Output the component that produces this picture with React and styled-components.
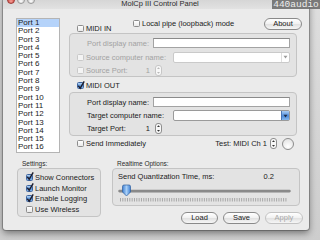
import React from "react";
import styled, { createGlobalStyle } from "styled-components";

const GlobalStyle = createGlobalStyle`
  html, body { margin: 0; padding: 0; }
  body {
    width: 320px;
    height: 240px;
    overflow: hidden;
    background: #d7d7d7;
    font-family: "Liberation Sans", Arial, sans-serif;
    font-size: 7.5px;
    color: #1b1b1b;
  }
  * { box-sizing: border-box; }
`;

const Desktop = styled.div`
  position: relative;
  width: 320px;
  height: 240px;
  overflow: hidden;
  background: linear-gradient(#dedede, #cdcdcd);
`;

const Watermark = styled.div`
  position: absolute;
  top: 0;
  right: 0;
  width: 48px;
  height: 9px;
  background: rgba(105, 105, 105, 0.85);
  color: #ededed;
  font-family: "Liberation Mono", monospace;
  font-size: 9.5px;
  line-height: 9px;
  text-align: center;
`;

const Window = styled.div`
  margin: -5px 0 0 3px;
  width: 306px;
  height: 235px;
  background: #ebebeb;
  border-radius: 0 0 3px 3px;
  box-shadow: 0 0 0 1px rgba(0, 0, 0, 0.22), 0 3px 7px rgba(0, 0, 0, 0.45);
  display: flex;
  flex-direction: column;
`;

const TitleBar = styled.div`
  flex: none;
  height: 14px;
  display: grid;
  grid-template-columns: 1fr auto 1fr;
  align-items: start;
  padding: 1px 0 0 4px;
  background: linear-gradient(#cfcfcf, #e2e2e2);
`;

const Lights = styled.div`
  display: flex;
  gap: 2px;
`;

const Light = styled.span`
  width: 8px;
  height: 8px;
  border-radius: 50%;
  border: 1px solid ${(p) => (p.$red ? "#9c3a36" : "#9a9a9a")};
  background: ${(p) =>
    p.$red
      ? "radial-gradient(circle at 50% 70%, #f5a39b, #d0453d 70%)"
      : "radial-gradient(circle at 50% 70%, #ffffff, #c9c9c9 70%)"};
`;

const Title = styled.div`
  margin-top: 3px;
  padding-left: 4px;
  font-size: 7.5px;
  line-height: 9px;
  color: #2a2a2a;
  white-space: nowrap;
`;

const Content = styled.div`
  flex: 1;
  display: flex;
  flex-direction: column;
  padding: 8px 0 0 13px;
`;

const TopGrid = styled.div`
  display: grid;
  grid-template-columns: 44px 232px;
  column-gap: 9px;
  align-items: start;
`;

const PortList = styled.ul`
  margin: 1px 0 0;
  padding: 0;
  list-style: none;
  height: 135px;
  background: #ffffff;
  border: 1px solid #b4b4b4;
`;

const PortItem = styled.li`
  height: 8.31px;
  line-height: 8.31px;
  padding-left: 1px;
  font-size: 8px;
  white-space: nowrap;
  background: ${(p) => (p.$selected ? "#b5d3fa" : "transparent")};
`;

const RightPanel = styled.div`
  display: flex;
  flex-direction: column;
`;

const HeaderRow = styled.div`
  display: flex;
  align-items: flex-start;
  height: 16px;
  padding-left: 8px;
`;

const CheckLabel = styled.label`
  display: inline-flex;
  align-items: center;
  gap: 2px;
  height: 9px;
  margin-top: ${(p) => p.$top || 0}px;
  width: ${(p) => (p.$width ? `${p.$width}px` : "auto")};
  flex: ${(p) => (p.$grow ? 1 : "none")};
  white-space: nowrap;
  color: ${(p) => (p.$disabled ? "#a2a2a2" : "#1b1b1b")};
`;

const Box = styled.span`
  flex: none;
  width: 7px;
  height: 7px;
  border-radius: 1.5px;
  border: 1px solid ${(p) => (p.$disabled ? "#c9c9c9" : p.$checked ? "#3d64a0" : "#8c8c8c")};
  background: ${(p) =>
    p.$checked
      ? "linear-gradient(#b6d6f6, #5d97dd 55%, #7fb2ea)"
      : p.$disabled
      ? "#f4f4f4"
      : "linear-gradient(#ffffff, #e9e9e9)"};
  display: flex;
  align-items: center;
  justify-content: center;
  overflow: visible;
`;

const Checkbox = ({ checked, disabled }) => (
  <Box $checked={checked} $disabled={disabled}>
    {checked && (
      <svg width="8" height="8" viewBox="0 0 8 8" style={{ overflow: "visible" }}>
        <path d="M1.3 3.8 L3.2 6.2 L7.2 -0.6" fill="none" stroke="#1c1c2c" strokeWidth="1.4" />
      </svg>
    )}
  </Box>
);

const PillButton = styled.button`
  flex: none;
  width: ${(p) => p.$width || 37}px;
  height: 12px;
  margin: ${(p) => p.$margin || "0"};
  padding: 0;
  border-radius: 6px;
  border: 1px solid ${(p) => (p.disabled ? "#c3c3c3" : "#8a8a8a")};
  background: linear-gradient(#ffffff, #f2f2f2 45%, #e2e2e2 55%, #f6f6f6);
  font-family: "Liberation Sans", Arial, sans-serif;
  font-size: 7.5px;
  line-height: 10px;
  color: ${(p) => (p.disabled ? "#a9a9a9" : "#1b1b1b")};
`;

const GroupBox = styled.div`
  width: 228px;
  height: ${(p) => p.$height}px;
  border: 1px solid #c4c4c4;
  border-radius: 4px;
  background: #e3e3e3;
  padding: 4px 6px 0 7px;
  display: flex;
  flex-direction: column;
`;

const FormRow = styled.div`
  display: flex;
  align-items: center;
  height: ${(p) => p.$height || 10}px;
  margin-top: ${(p) => p.$top || 0}px;
`;

const FieldLabel = styled.span`
  flex: none;
  width: ${(p) => p.$width || 76}px;
  padding-left: 10px;
  white-space: nowrap;
  color: ${(p) => (p.$disabled ? "#a2a2a2" : "#1b1b1b")};
`;

const TextField = styled.div`
  flex: 1;
  height: 10px;
  background: #ffffff;
  border: 1px solid #a3a3a3;
  border-top-color: #8a8a8a;
`;

const Combo = styled.div`
  margin-left: auto;
  width: 117px;
  height: 11px;
  display: flex;
  justify-content: flex-end;
  background: #ffffff;
  border: 1px solid ${(p) => (p.$disabled ? "#cacaca" : "#9a9a9a")};
  border-radius: 2px;
`;

const ComboArrow = styled.span`
  width: 8px;
  height: 100%;
  display: flex;
  align-items: center;
  justify-content: center;
  border-left: 1px solid ${(p) => (p.$active ? "#4a76b5" : "#dedede")};
  background: ${(p) => (p.$active ? "linear-gradient(#a9cdf5, #4e8bda 55%, #86b8ee)" : "transparent")};
`;

const ValueCell = styled.span`
  flex: none;
  width: 73px;
  display: flex;
  align-items: center;
  justify-content: space-between;
  padding-left: ${(p) => (p.$flush ? 0 : 10)}px;
  color: ${(p) => (p.$disabled ? "#a2a2a2" : "#1b1b1b")};
`;

const StepperWrap = styled.span`
  flex: none;
  display: flex;
  margin-left: ${(p) => p.$left || 5}px;
`;

const Stepper = ({ disabled, left }) => (
  <StepperWrap $left={left}>
    <svg width="7" height="11" viewBox="0 0 7 11">
      <rect x="0.5" y="0.5" width="6" height="10" rx="2.5" fill="#f7f7f7" stroke={disabled ? "#c6c6c6" : "#8e8e8e"} />
      <path d="M2 4 L3.5 2.3 L5 4 Z" fill={disabled ? "#b8b8b8" : "#333"} />
      <path d="M2 7 L3.5 8.7 L5 7 Z" fill={disabled ? "#b8b8b8" : "#333"} />
    </svg>
  </StepperWrap>
);

const ArrowDown = ({ color }) => (
  <svg width="5" height="4" viewBox="0 0 5 4">
    <path d="M0.5 0.8 L4.5 0.8 L2.5 3.4 Z" fill={color} />
  </svg>
);

const CheckRow = styled.div`
  display: flex;
  align-items: flex-start;
  height: ${(p) => p.$height}px;
  padding-left: 8px;
`;

const ActionRow = styled.div`
  display: flex;
  align-items: center;
  height: 13px;
  margin-top: 1px;
  padding: 0 7px 0 8px;
`;

const TestGroup = styled.div`
  margin-left: auto;
  display: flex;
  align-items: center;
`;

const RoundButton = styled.span`
  width: 12px;
  height: 12px;
  margin-left: 5px;
  border-radius: 50%;
  border: 1px solid #8c8c8c;
  background: radial-gradient(circle at 50% 75%, #ffffff, #e6e6e6 75%);
`;

const BottomGrid = styled.div`
  display: grid;
  grid-template-columns: 85px 189px;
  column-gap: 11px;
  margin-top: 6px;
`;

const Column = styled.div`
  display: flex;
  flex-direction: column;
`;

const SectionLabel = styled.div`
  height: 9px;
  line-height: 9px;
  padding-left: ${(p) => p.$pad}px;
  font-size: 6.5px;
  color: #2a2a2a;
`;

const SettingsBox = styled.div`
  margin-left: 1px;
  width: 84px;
  height: 49px;
  border: 1px solid #c4c4c4;
  border-radius: 4px;
  background: #e3e3e3;
  padding: 3px 0 0 8px;
  display: flex;
  flex-direction: column;
`;

const SettingItem = styled.div`
  height: 10.7px;
  display: flex;
  align-items: center;
`;

const RealtimeBox = styled.div`
  width: 188px;
  height: 38px;
  border: 1px solid #c4c4c4;
  border-radius: 4px;
  background: #e3e3e3;
  padding: 4px 0 0 5px;
  display: flex;
  flex-direction: column;
`;

const QuantRow = styled.div`
  height: 8px;
  line-height: 8px;
  display: flex;
  justify-content: space-between;
  padding-right: 25px;
`;

const SliderWrap = styled.div`
  margin-top: 2px;
  height: 20px;
  display: flex;
`;

const ButtonRow = styled.div`
  display: flex;
  justify-content: flex-end;
  gap: 5px;
  margin: 6px -2px 0 0;
`;

const Slider = () => {
  const ticks = [];
  for (let i = 0; i < 72; i++) {
    const x = 2.5 + i * 2.33;
    ticks.push(<line key={i} x1={x} y1="15" x2={x} y2="18.5" stroke="#8d8d8d" strokeWidth="0.7" />);
  }
  return (
    <svg width="174" height="20" viewBox="0 0 174 20">
      <rect x="0.5" y="7" width="172" height="2.2" rx="1.1" fill="#8f8f8f" stroke="#6f6f6f" strokeWidth="0.4" />
      {ticks}
      <defs>
        <linearGradient id="knob" x1="0" y1="0" x2="1" y2="0">
          <stop offset="0" stopColor="#3f7fd2" />
          <stop offset="0.5" stopColor="#a9d0f7" />
          <stop offset="1" stopColor="#3f7fd2" />
        </linearGradient>
      </defs>
      <path d="M4.5 3.5 Q4.5 2 6 2 L11 2 Q12.5 2 12.5 3.5 L12.5 9 L8.5 13 L4.5 9 Z" fill="url(#knob)" stroke="#2e5f9e" strokeWidth="0.7" />
    </svg>
  );
};

const ports = Array.from({ length: 16 }, (_, i) => `Port ${i + 1}`);

export default function App() {
  return (
    <>
      <GlobalStyle />
      <Desktop>
        <Window>
          <TitleBar>
            <Lights>
              <Light $red />
              <Light />
              <Light />
            </Lights>
            <Title>MolCp III Control Panel</Title>
            <span />
          </TitleBar>
          <Content>
            <TopGrid>
              <PortList>
                {ports.map((p, i) => (
                  <PortItem key={p} $selected={i === 0}>
                    {p}
                  </PortItem>
                ))}
              </PortList>
              <RightPanel>
                <HeaderRow>
                  <CheckLabel $top={7} $width={56}>
                    <Checkbox />
                    MIDI IN
                  </CheckLabel>
                  <CheckLabel $top={2} $grow>
                    <Checkbox />
                    Local pipe (loopback) mode
                  </CheckLabel>
                  <PillButton $width={38} $margin="1px -1px 0 0">
                    About
                  </PillButton>
                </HeaderRow>
                <GroupBox $height={44}>
                  <FormRow>
                    <FieldLabel $disabled>Port display name:</FieldLabel>
                    <TextField />
                  </FormRow>
                  <FormRow $top={3} $height={12}>
                    <CheckLabel $disabled>
                      <Checkbox disabled />
                      Source computer name:
                    </CheckLabel>
                    <Combo $disabled>
                      <ComboArrow>
                        <ArrowDown color="#9a9a9a" />
                      </ComboArrow>
                    </Combo>
                  </FormRow>
                  <FormRow $top={2} $height={11}>
                    <ValueCell $disabled $flush>
                      <CheckLabel $disabled>
                        <Checkbox disabled />
                        Source Port:
                      </CheckLabel>
                      <span>1</span>
                    </ValueCell>
                    <Stepper disabled />
                  </FormRow>
                </GroupBox>
                <CheckRow $height={15}>
                  <CheckLabel $top={4}>
                    <Checkbox checked />
                    MIDI OUT
                  </CheckLabel>
                </CheckRow>
                <GroupBox $height={44}>
                  <FormRow>
                    <FieldLabel>Port display name:</FieldLabel>
                    <TextField />
                  </FormRow>
                  <FormRow $top={3} $height={11}>
                    <FieldLabel $width={96}>Target computer name:</FieldLabel>
                    <Combo>
                      <ComboArrow $active>
                        <ArrowDown color="#1d2b44" />
                      </ComboArrow>
                    </Combo>
                  </FormRow>
                  <FormRow $top={2} $height={11}>
                    <ValueCell>
                      <span>Target Port:</span>
                      <span>1</span>
                    </ValueCell>
                    <Stepper />
                  </FormRow>
                </GroupBox>
                <ActionRow>
                  <CheckLabel>
                    <Checkbox />
                    Send Immediately
                  </CheckLabel>
                  <TestGroup>
                    <span>Test: MIDI Ch 1</span>
                    <Stepper left={3} />
                    <RoundButton />
                  </TestGroup>
                </ActionRow>
              </RightPanel>
            </TopGrid>
            <BottomGrid>
              <Column>
                <SectionLabel $pad={6}>Settings:</SectionLabel>
                <SettingsBox>
                  <SettingItem>
                    <CheckLabel>
                      <Checkbox checked />
                      Show Connectors
                    </CheckLabel>
                  </SettingItem>
                  <SettingItem>
                    <CheckLabel>
                      <Checkbox checked />
                      Launch Monitor
                    </CheckLabel>
                  </SettingItem>
                  <SettingItem>
                    <CheckLabel>
                      <Checkbox checked />
                      Enable Logging
                    </CheckLabel>
                  </SettingItem>
                  <SettingItem>
                    <CheckLabel>
                      <Checkbox />
                      Use Wireless
                    </CheckLabel>
                  </SettingItem>
                </SettingsBox>
              </Column>
              <Column>
                <SectionLabel $pad={5}>Realtime Options:</SectionLabel>
                <RealtimeBox>
                  <QuantRow>
                    <span>Send Quantization Time, ms:</span>
                    <span>0.2</span>
                  </QuantRow>
                  <SliderWrap>
                    <Slider />
                  </SliderWrap>
                </RealtimeBox>
                <ButtonRow>
                  <PillButton>Load</PillButton>
                  <PillButton>Save</PillButton>
                  <PillButton $width={38} disabled>
                    Apply
                  </PillButton>
                </ButtonRow>
              </Column>
            </BottomGrid>
          </Content>
        </Window>
        <Watermark>440audio</Watermark>
      </Desktop>
    </>
  );
}
